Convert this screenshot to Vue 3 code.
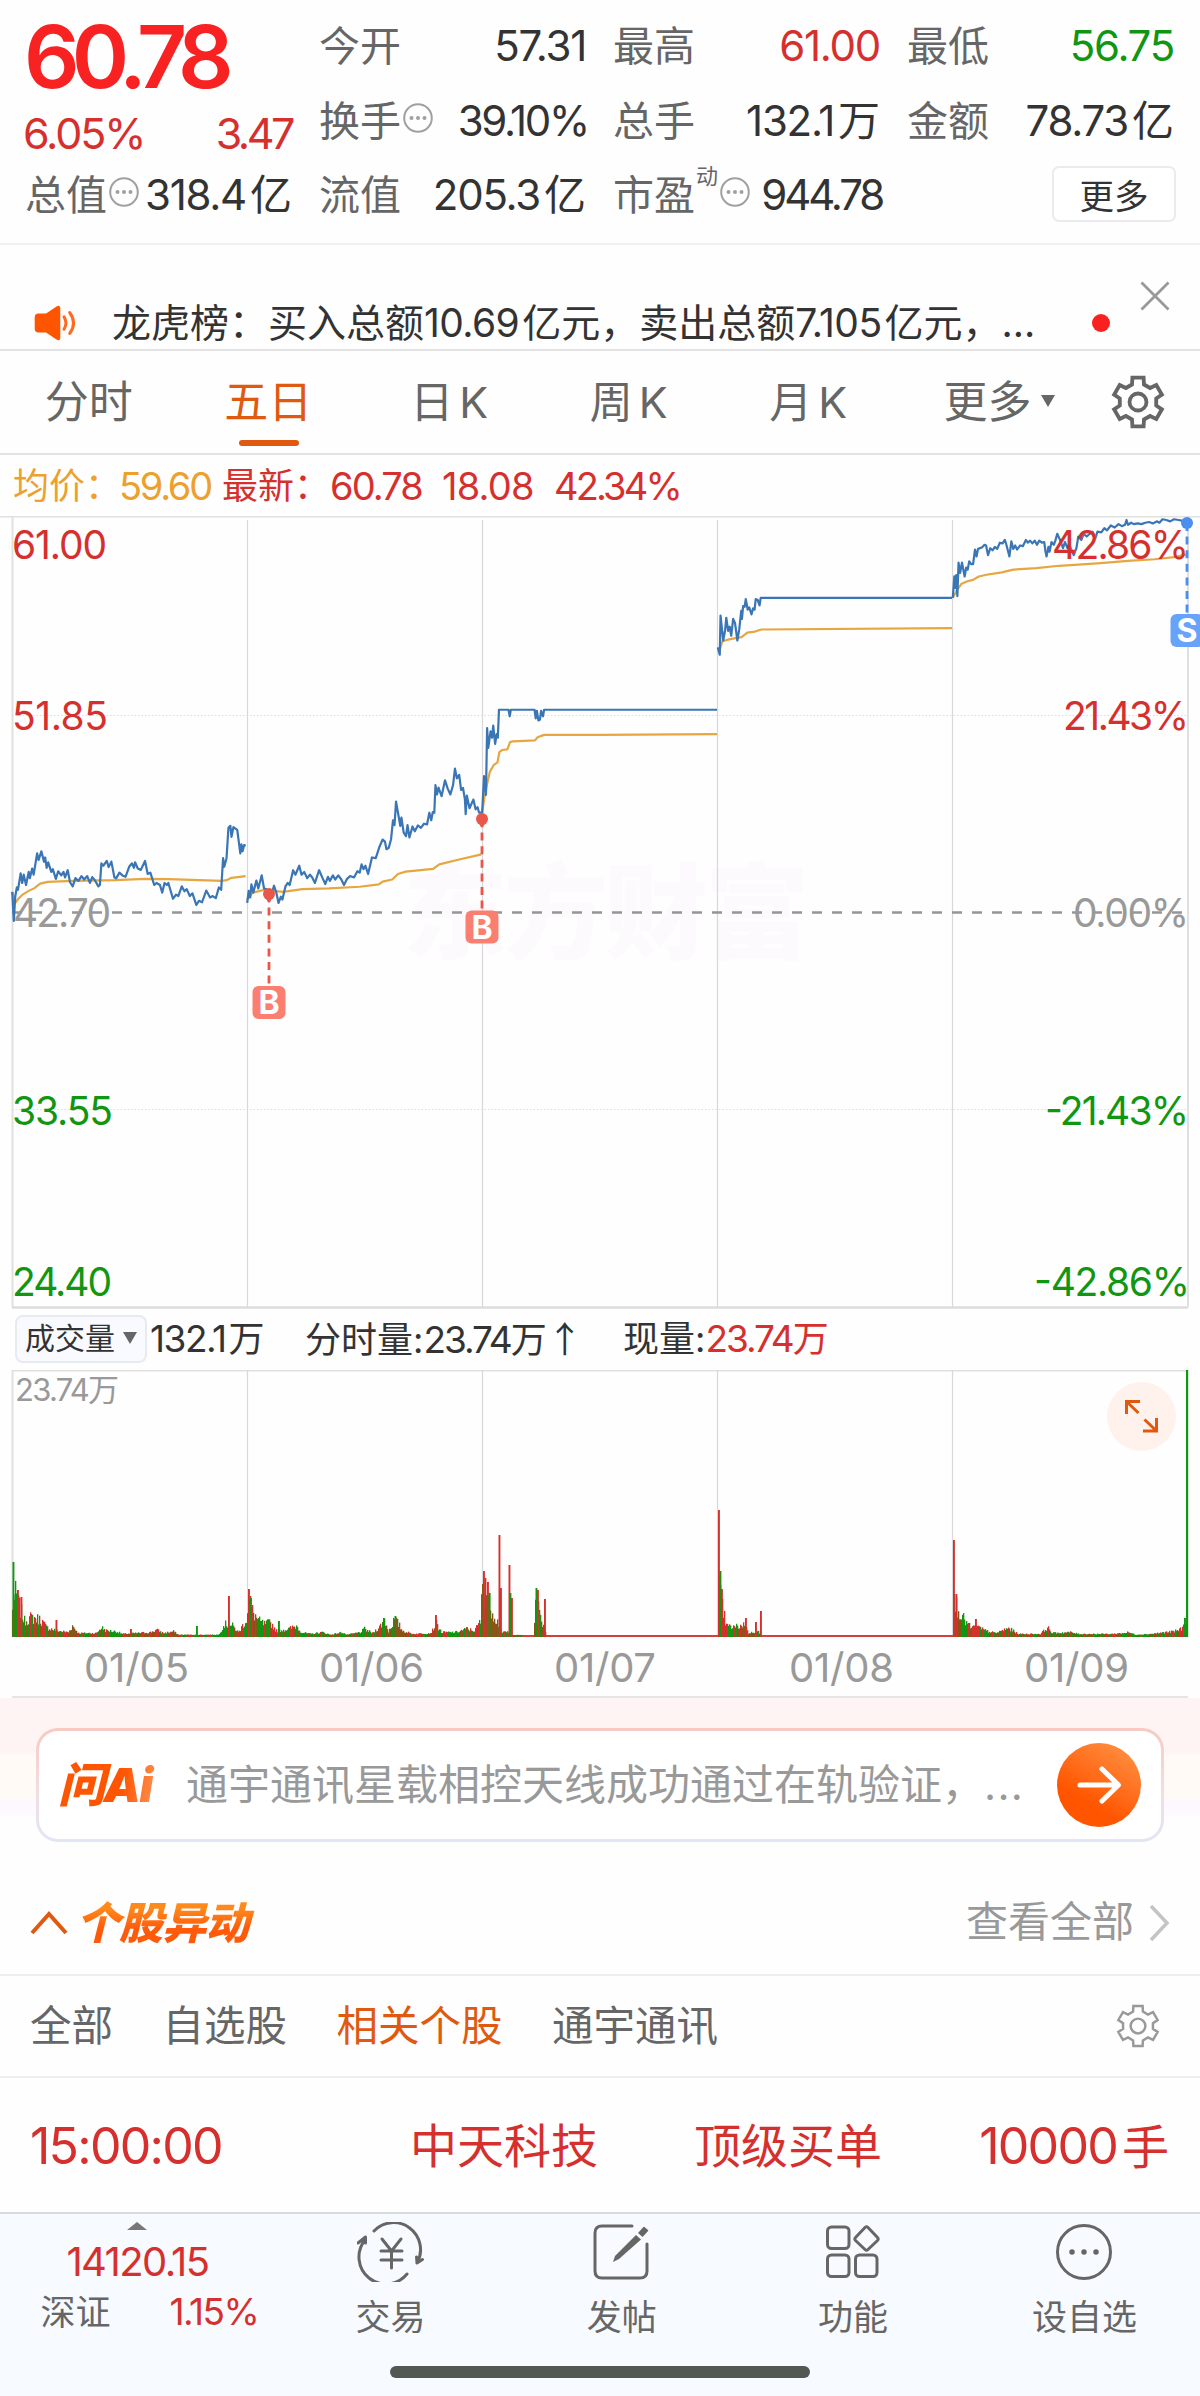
<template>
  <div class="page">
    <header class="quote">
      <div class="quote-col">
        <div class="price">60.78</div>
        <div class="change"><span>6.05%</span><span class="tight">3.47</span></div>
        <div class="cell cap">
          <span class="label">总值</span>
          <svg class="more-dot" viewBox="0 0 30 30"><circle cx="15" cy="15" r="13.8" /><path d="M8.5 15h.01M15 15h.01M21.5 15h.01" /></svg>
          <span class="value">318.4<i class="unit">亿</i></span>
        </div>
      </div>
      <div v-for="(col, i) in quoteCols" :key="i" class="quote-col">
        <div v-for="item in col" :key="item.label" class="cell">
          <span class="label">{{ item.label }}</span>
          <sup v-if="item.sup" class="label-sup">{{ item.sup }}</sup>
          <svg v-if="item.dot" class="more-dot" viewBox="0 0 30 30"><circle cx="15" cy="15" r="13.8" /><path d="M8.5 15h.01M15 15h.01M21.5 15h.01" /></svg>
          <span :class="['value', item.cls]">{{ item.value }}<i v-if="item.unit" class="unit">{{ item.unit }}</i></span>
        </div>
        <div v-if="col.length < 3" class="cell">
          <button class="more-btn">更多</button>
        </div>
      </div>
    </header>

    <section class="notice">
      <svg class="speaker" viewBox="0 0 46 38">
        <path d="M4 9h8L23 1.5q4-2 4 2v31q0 4-4 2L12 29H4q-4 0-4-4V13q0-4 4-4z" fill="#ff5500" />
        <path d="M31 12.5q4 6.500 0 13M37 8q8 11 0 22" fill="none" stroke="#ff6a20" stroke-width="3.200" stroke-linecap="round" />
      </svg>
      <p class="notice-text">龙虎榜：买入总额<i>10.69</i>亿元，卖出总额<i>7.105</i>亿元，...</p>
      <span class="red-dot"></span>
      <svg class="close" viewBox="0 0 30 30"><path d="M1.500 1.500l27 27M28.500 1.500l-27 27" /></svg>
    </section>

    <nav class="tabs">
      <div v-for="tab in tabs" :key="tab" :class="['tab', { active: tab === '五日', kline: tab.endsWith('K') }]">{{ tab }}</div>
      <div class="tab">更多<i class="caret"></i></div>
      <svg class="gear" viewBox="-28 -28 56 56"><path :d="gearPath" /><circle r="8.500" /></svg>
    </nav>

    <div class="legend">
      <span class="avg">均价：</span><span class="avg num">59.60</span>
      <span class="latest">最新：</span><span class="num">60.78</span><span class="num wide">18.08</span><span class="num">42.34%</span>
    </div>

    <svg class="chart" viewBox="0 0 1200 793" width="1200" height="793">
      <text class="watermark" x="403" y="435" textLength="406">东方财富</text>
      <path class="frame" d="M0 .5H1200M12.500 0V791M1188 0V791" />
      <path class="grid" d="M247.500 4V791M482.500 4V791M717.500 4V791M952.500 4V791" />
      <path class="dotted" d="M12 199.500H1188M12 593.500H1188" />
      <path d="M12 791.500H1188" stroke="#dcdcdc" stroke-width="2.500" />
      <path class="zero" d="M12 396.500H1188" />
      <g transform="translate(0 -16) scale(.38265 .34439)">
        <polyline v-for="(p, i) in avgLines" :key="'a' + i" class="line avg-line" :points="p" />
        <polyline v-for="(p, i) in priceLines" :key="'p' + i" class="line price-line" :points="p" />
        <g transform="translate(1568 0)">
          <polyline v-for="(p, i) in avgLinesRight" :key="'ar' + i" class="line avg-line" :points="p" />
          <polyline v-for="(p, i) in priceLinesRight" :key="'pr' + i" class="line price-line" :points="p" />
        </g>
      </g>
      <text
        v-for="a in axis"
        :key="a.text"
        :x="a.x"
        :y="a.y"
        :fill="a.fill"
        :textLength="a.w"
        class="axis"
      >{{ a.text }}</text>
      <g v-for="m in marks" :key="m.x">
        <path :d="`M${m.x} ${m.from}V${m.to}`" :stroke="m.line" class="mark-line" />
        <circle :cx="m.x" :cy="m.from" r="6" :fill="m.line" />
        <path v-if="m.text === 'B'" :d="`M${m.x - 5} ${m.from + 2}l5 7l5-7z`" :fill="m.line" />
        <rect :x="m.x - 16.500" :y="m.to" width="33" height="33" rx="6" :fill="m.fill" />
        <text :x="m.x" :y="m.to + 28" class="mark-text">{{ m.text }}</text>
      </g>
    </svg>

    <div class="volume-bar">
      <span class="pill">成交量<i class="caret small"></i></span>
      <span class="vol-total"><i>132.1</i>万</span>
      <span class="vol-minute">分时量:<i>23.74</i>万<b>↑</b></span>
      <span class="vol-now">现量:<em><i>23.74</i>万</em></span>
    </div>

    <svg class="volume" viewBox="0 0 1200 328" width="1200" height="328">
      <path class="frame" d="M12 .5H1188M12.500 0V267" />
      <path class="grid" d="M247.500 0V267M482.500 0V267M717.500 0V267M952.500 0V267" />
      <text class="vol-max" x="15" y="31" textLength="104">23.74万</text>
      <circle cx="1141.500" cy="46.500" r="34.400" fill="#fff1eb" />
      <path class="expand" d="M1126.500 44V31.500H1140M1127.500 32.500L1138.500 43M1156.500 48V61H1143M1155.500 60L1144.500 49.500" />
      <path d="M12 266H1188" stroke="#d0403c" stroke-width="2" />
      <rect
        v-for="(b, i) in bars"
        :key="i"
        :x="b.x"
        :y="267 - b.h"
        :width="b.w"
        :height="b.h"
        :fill="b.color"
      />
      <text v-for="d in dates" :key="d.text" class="date" :x="d.x" y="312" :textLength="d.w">{{ d.text }}</text>
      <path d="M12 327H1188" stroke="#e6e4e4" stroke-width="2" />
    </svg>

    <section class="ai">
      <div class="ai-box">
        <div class="ai-inner">
          <span class="ai-logo">问Ai</span>
          <span class="ai-text">通宇通讯星载相控天线成功通过在轨验证，<i>...</i></span>
          <svg class="ai-go" viewBox="0 0 84 84">
            <defs>
              <linearGradient id="go" x1="0.300" y1="0.900" x2="0.800" y2="0.100">
                <stop offset="0.200" stop-color="#ff5500" />
                <stop offset="1" stop-color="#ff8a3c" />
              </linearGradient>
            </defs>
            <circle cx="42" cy="42" r="42" fill="url(#go)" />
            <path d="M23 42H61M45 26L61.500 42L45 58" fill="none" stroke="#fff" stroke-width="5" stroke-linecap="round" stroke-linejoin="round" />
          </svg>
        </div>
      </div>
    </section>

    <section class="moves-head">
      <svg class="chev-up" viewBox="0 0 38 26"><path d="M2 23L19 4L36 23" /></svg>
      <h2>个股异动</h2>
      <span class="all">查看全部</span>
      <svg class="chev-right" viewBox="0 0 22 38"><path d="M3 2L19 19L3 36" /></svg>
    </section>

    <nav class="filters">
      <span v-for="f in filters" :key="f" :class="{ active: f === '相关个股' }">{{ f }}</span>
      <svg class="gear light" viewBox="-28 -28 56 56"><path :d="gearPath" /><circle r="9" /></svg>
    </nav>

    <div class="move-row">
      <span class="time">15:00:00</span>
      <span class="name">中天科技</span>
      <span class="kind">顶级买单</span>
      <span class="amount"><i>10000</i>手</span>
    </div>

    <footer class="bottom">
      <div class="bottom-items">
        <div class="index">
          <i class="up"></i>
          <div class="index-val">14120.15</div>
          <div class="index-row"><span>深证</span><span class="pct">1.15%</span></div>
        </div>
        <div class="item">
          <svg viewBox="0 0 68 60" class="icon">
            <path d="M17 9A27 27 0 0 1 60 41M60 41l-.500-6M60 41l5.500-3.500" />
            <path d="M50 52A27 27 0 0 1 8 18M1 21l7.500-6v6" />
            <path d="M25 17l9.500 12L44 17M34.500 29v17M24 29h21M24 38h21" />
          </svg>
          <span>交易</span>
        </div>
        <div class="item">
          <svg viewBox="0 0 68 60" class="icon">
            <path d="M44 4H14q-7 0-7 7v38q0 7 7 7h38q7 0 7-7V22" />
            <path d="M51 11l5-5.500 3.500 3-5 5.500z" fill="#666" stroke-width="1.500" />
            <path d="M48 13l5 4.500L31 37l-6 3 2-6z" fill="#666" stroke="none" />
          </svg>
          <span>发帖</span>
        </div>
        <div class="item">
          <svg viewBox="0 0 68 60" class="icon">
            <rect x="8.500" y="5" width="21.500" height="21.500" rx="4" />
            <rect x="8.500" y="33" width="21.500" height="21.500" rx="4" />
            <rect x="36.500" y="33" width="21.500" height="21.500" rx="4" />
            <path d="M46 5.500q1.500-1.500 3 0l9.500 10q1.500 1.500 0 3l-9.500 9q-1.500 1.500-3 0l-9.500-9q-1.500-1.500 0-3z" />
          </svg>
          <span>功能</span>
        </div>
        <div class="item">
          <svg viewBox="0 0 68 60" class="icon">
            <circle cx="34" cy="30" r="26.500" />
            <path d="M22 30h.01M34 30h.01M46 30h.01" stroke-width="5.500" />
          </svg>
          <span>设自选</span>
        </div>
      </div>
      <div class="home"></div>
    </footer>
  </div>
</template>

<script setup>
import { computed } from 'vue'

const quoteCols = [
  [
    { label: '今开', value: '57.31' },
    { label: '换手', value: '39.10%', cls: 'tight', dot: true },
    { label: '流值', value: '205.3', unit: '亿' },
  ],
  [
    { label: '最高', value: '61.00', cls: 'red' },
    { label: '总手', value: '132.1', unit: '万' },
    { label: '市盈', sup: '动', value: '944.78', cls: 'tighter', dot: true },
  ],
  [
    { label: '最低', value: '56.75', cls: 'green' },
    { label: '金额', value: '78.73', unit: '亿' },
  ],
]

const tabs = ['分时', '五日', '日K', '周K', '月K']
const filters = ['全部', '自选股', '相关个股', '通宇通讯']

const dates = [
  { text: '01/05', x: 84, w: 105 },
  { text: '01/06', x: 319, w: 105 },
  { text: '01/07', x: 554, w: 102 },
  { text: '01/08', x: 789, w: 105 },
  { text: '01/09', x: 1024, w: 105 },
]

const RED = '#d6302e'
const GREEN = '#119611'
const GRAY = '#999999'

const axis = [
  { text: '61.00', x: 12, y: 43, w: 95, fill: RED },
  { text: '51.85', x: 12, y: 214, w: 96, fill: RED },
  { text: '42.70', x: 13, y: 411, w: 98, fill: GRAY },
  { text: '33.55', x: 12, y: 609, w: 101, fill: GREEN },
  { text: '24.40', x: 12, y: 780, w: 100, fill: GREEN },
  { text: '42.86%', x: 1052, y: 43, w: 137, fill: RED },
  { text: '21.43%', x: 1063, y: 214, w: 126, fill: RED },
  { text: '0.00%', x: 1073, y: 411, w: 116, fill: GRAY },
  { text: '-21.43%', x: 1045, y: 609, w: 144, fill: GREEN },
  { text: '-42.86%', x: 1034, y: 780, w: 156, fill: GREEN },
]

const marks = [
  { text: 'B', x: 269, from: 378, to: 470, line: '#e8574a', fill: '#fa7f70' },
  { text: 'B', x: 482, from: 303, to: 394.5, line: '#e8574a', fill: '#fa7f70' },
  { text: 'S', x: 1187, from: 7, to: 98, line: '#4a8fee', fill: '#67a3fb' },
]

const priceLines = [
  '32,1138 36,1222 40,1150 44,1125 47,1132 54,1084 58,1112 62,1088 68,1118 75,1080 78,1098 84,1070 88,1088 97,1026 101,1045 108,1020 115,1050 118,1038 122,1068 126,1052 134,1080 138,1072 146,1100 152,1078 160,1090 166,1080 170,1096 177,1075 183,1110 190,1122 197,1098 205,1106 213,1092 220,1102 228,1092 235,1112 241,1095 248,1104 257,1122 261,1118 265,1055 270,1062 279,1048 284,1066 291,1050 299,1096 304,1098 312,1082 320,1090 328,1094 338,1064 345,1055 350,1068 353,1052 360,1070 368,1074 379,1048 386,1086 393,1082 403,1118 409,1112 418,1118 424,1140 430,1112 436,1118 440,1112 452,1158 460,1146 466,1150 475,1122 482,1136 488,1130 496,1150 503,1142 513,1176 520,1164 528,1168 539,1134 549,1154 556,1150 564,1156 572,1125 578,1132 583,1040 586,1065 592,1040 597,952 602,946 605,978 610,950 620,958 628,1026 631,1000 634,1020 638,1002 642,1004',
  '646,1170 650,1135 654,1154 657,1116 662,1140 670,1105 675,1128 684,1090 690,1128 696,1130 703,1165 708,1150 716,1120 722,1140 728,1170 734,1152 738,1160 746,1122 752,1112 757,1118 766,1075 772,1088 782,1062 788,1088 795,1080 803,1098 810,1088 816,1096 823,1112 834,1075 843,1098 850,1115 857,1094 862,1106 870,1090 876,1102 884,1090 892,1102 899,1118 907,1100 915,1092 925,1096 934,1078 940,1082 945,1058 950,1072 955,1062 962,1086 972,1038 982,1040 992,1006 1000,986 1006,992 1010,1014 1016,1010 1022,985 1027,930 1031,944 1035,876 1042,920 1046,946 1049,922 1055,966 1061,976 1065,944 1070,980 1078,948 1084,962 1092,945 1100,952 1108,940 1116,942 1122,908 1127,930 1131,906 1135,908 1138,828 1142,855 1146,835 1154,860 1163,814 1170,838 1177,855 1184,828 1189,780 1194,808 1200,798 1205,842 1210,836 1215,870 1217,912 1220,858 1227,895 1237,870 1243,898 1248,892 1252,908 1260,908 1265,802 1270,856 1273,662 1276,720 1282,672 1286,690 1289,655 1294,708 1298,680 1301,690 1304,609 1329,609 1332,628 1335,609 1397,609 1400,634 1403,612 1407,640 1411,638 1414,612 1419,628 1422,609 1874,609',
]
const priceLinesRight = [
  '308,428 313,449 315,336 322,408 327,378 330,342 335,380 339,368 343,394 348,345 353,358 359,408 364,375 369,322 371,345 374,308 378,310 381,288 386,318 390,312 396,332 400,315 404,318 407,288 412,290 417,306 420,284 920,284',
  '922,284 926,222 928,255 931,218 934,279 937,182 941,212 946,182 953,222 957,196 961,202 965,178 970,186 975,186 980,144 984,164 988,142 998,138 1005,130 1009,132 1014,160 1020,140 1026,146 1032,136 1038,142 1045,124 1052,126 1058,116 1062,130 1070,164 1075,120 1080,142 1085,132 1090,144 1098,132 1105,134 1113,116 1118,124 1124,118 1130,126 1136,118 1142,130 1148,118 1155,124 1161,122 1164,148 1167,164 1172,136 1175,150 1180,122 1186,130 1190,118 1195,98 1203,118 1210,140 1215,122 1222,140 1226,128 1230,140 1238,160 1245,140 1250,106 1258,116 1264,98 1272,106 1280,98 1287,92 1295,110 1300,92 1310,94 1318,82 1325,88 1335,74 1345,80 1355,70 1364,76 1372,72 1376,58 1380,72 1388,66 1395,70 1405,68 1415,70 1425,66 1435,64 1445,68 1455,62 1462,66 1470,56 1480,58 1490,62 1500,56 1512,58 1520,60 1533,64',
]
const avgLines = [
  '32,1138 40,1170 48,1158 60,1145 75,1135 90,1127 105,1114 125,1109 190,1106 300,1104 380,1100 440,1101 580,1106 592,1104 605,1097 642,1092',
  '646,1160 660,1140 690,1132 740,1138 790,1130 860,1128 940,1123 990,1116 1000,1108 1025,1102 1040,1086 1060,1079 1132,1071 1148,1058 1200,1044 1258,1029',
  '1260,910 1265,870 1272,830 1280,790 1290,770 1300,762 1305,732 1312,726 1326,724 1333,703 1340,701 1398,698 1405,689 1422,682 1568,682 1874,680',
]
const avgLinesRight = [
  '308,430 311,440 320,410 340,404 370,398 385,385 405,382 422,376 920,372',
  '922,284 934,260 945,243 960,236 975,232 990,222 1010,217 1050,210 1080,202 1140,198 1200,191 1300,184 1380,177 1450,172 1500,166 1534,158',
]

// upper envelope of the minute volumes: [x, height], heights in between are interpolated
const envelope = [
  [12, 30], [15, 50], [19, 36], [24, 18], [30, 22], [40, 20], [46, 10], [56, 6], [68, 4], [72, 12], [78, 3], [96, 3], [101, 10], [106, 6], [116, 5], [122, 2], [150, 4], [156, 7], [163, 3], [173, 5], [178, 1], [218, 1], [224, 14], [232, 12], [238, 4], [246, 20],
  [248, 48], [252, 30], [258, 18], [264, 14], [270, 16], [276, 6], [288, 8], [296, 12], [301, 4], [310, 2], [322, 4], [330, 1], [342, 4], [346, 1], [360, 4], [364, 8], [372, 3], [380, 12], [384, 20], [388, 5], [394, 20], [398, 14], [402, 6], [412, 2], [430, 3], [436, 14], [441, 4], [455, 4], [466, 8], [474, 6], [480, 18],
  [482, 62], [486, 50], [492, 30], [499, 12], [501, 3], [507, 5], [509, 1], [533, 0], [535, 48], [540, 22], [545, 6], [546, 0], [717, 0],
  [718, 62], [722, 34], [726, 12], [732, 10], [740, 12], [744, 14], [748, 3], [758, 5], [760, 0], [952, 0],
  [953, 42], [958, 34], [962, 22], [970, 10], [978, 10], [985, 6], [995, 3], [1008, 9], [1018, 2], [1040, 2], [1047, 10], [1052, 3], [1070, 4], [1078, 2], [1112, 2], [1122, 3], [1128, 4], [1135, 1], [1150, 2], [1165, 4], [1174, 5], [1182, 9], [1186, 18],
]

const spikes = [
  [12.5, 75, GREEN], [14.5, 43, GREEN], [17, 47, RED], [20.5, 40, RED], [30, 20, RED], [34, 19, RED], [55.5, 17, RED], [130, 8, RED], [196, 11, GREEN], [228, 41, RED],
  [248, 48, RED], [250, 39, GREEN], [278, 16, GREEN], [383, 19, GREEN], [394.5, 21, GREEN], [435, 22, RED], [466, 10, RED],
  [483, 66, RED], [484.5, 59, RED], [487, 55, RED], [488.5, 44, GREEN], [498.5, 102, RED], [500, 49, RED], [508.5, 72, RED], [509.5, 44, GREEN], [511, 39, RED], [535.5, 49, GREEN], [537, 47, RED], [544, 38, RED],
  [718, 127, RED], [719.5, 66, GREEN], [721, 48, RED], [745, 19, RED], [755, 15, RED], [760, 26, RED],
  [953, 97, RED], [955.5, 43, RED], [975, 18, RED], [1184, 19, GREEN],
]

const bars = computed(() => {
  const out = []
  let seed = 7
  for (let i = 1; i < envelope.length; i++) {
    const [x0, h0] = envelope[i - 1]
    const [x1, h1] = envelope[i]
    for (let x = x0; x < x1; x += 1) {
      seed = (seed * 1103515245 + 12345) % 2147483648
      const r = seed / 2147483648
      const top = h0 + ((h1 - h0) * (x - x0)) / (x1 - x0)
      if (top < 0.5) continue
      out.push({
        x,
        w: 1.3,
        h: 1.5 + top * (0.5 + r * 0.6),
        color: Math.floor(r * 97) % 5 < 2 ? GREEN : r > 0.6 ? RED : '#8a5316',
      })
    }
  }
  for (const [x, h, color] of spikes) out.push({ x, w: 1.9, h, color })
  out.push({ x: 1186, w: 2.2, h: 267, color: GREEN })
  return out
})

const gearPath = computed(() => {
  const pts = []
  for (let k = 0; k < 6; k++) {
    for (const [r, a] of [[18.5, -19], [25, -13], [25, 13], [18.5, 19]]) {
      const t = ((k * 60 - 90 + a) * Math.PI) / 180
      pts.push(`${(r * Math.cos(t)).toFixed(1)} ${(r * Math.sin(t)).toFixed(1)}`)
    }
  }
  return `M${pts.join('L')}Z`
})
</script>

<style>
body {
  margin: 0;
  background: #fff;
}
</style>

<style scoped>
.page {
  width: 1200px;
  height: 2396px;
  overflow: hidden;
  display: flex;
  flex-direction: column;
  background: #fefefe;
  color: #333;
  font-family: Inter, "Noto Sans CJK SC", sans-serif;
  line-height: 1.4;
  white-space: nowrap;
}

.page > * {
  flex-shrink: 0;
  box-sizing: border-box;
}

i,
em {
  font-style: normal;
}

.num {
  letter-spacing: -0.05em;
}

/* quote */
.quote {
  height: 245px;
  padding: 9px 24px 0 25px;
  display: grid;
  grid-template-columns: repeat(4, 267px);
  column-gap: 27px;
  border-bottom: 2px solid #f0f0f0;
}

.quote-col {
  display: flex;
  flex-direction: column;
}

.price {
  height: 96px;
  margin-left: -1px;
  line-height: 95px;
  font-size: 87px;
  font-weight: 600;
  color: #f82222;
  letter-spacing: -0.09em;
}

.change {
  height: 56px;
  margin-left: -2px;
  line-height: 56px;
  font-size: 43px;
  letter-spacing: -0.05em;
  color: #d6302e;
  display: flex;
  justify-content: space-between;
}

.change .tight {
  letter-spacing: -0.08em;
}

.cell {
  height: 74.5px;
  display: flex;
  align-items: center;
  font-size: 42px;
  line-height: 60px;
}

.cell.cap {
  height: 68px;
}

.label {
  font-size: 41px;
  color: #666;
}

.label-sup {
  font-size: 22px;
  line-height: 24px;
  color: #666;
  align-self: flex-start;
  margin: 6px 0 0 1px;
}

.more-dot {
  width: 30px;
  height: 30px;
  margin: -6px 0 0 2px;
  fill: none;
  stroke: #a0a0a0;
  stroke-width: 2;
}

.more-dot path {
  stroke-width: 4;
  stroke-linecap: round;
}

.value {
  margin-left: auto;
  letter-spacing: -0.03em;
}

.value.tight {
  margin-right: -2px;
  letter-spacing: -0.055em;
}

.value.tighter {
  margin-right: -2px;
  letter-spacing: -0.075em;
}

.unit {
  margin-left: 4px;
  letter-spacing: 0;
}

.value.red {
  color: #d6302e;
}

.value.green {
  color: #119611;
}

.more-btn {
  width: 124px;
  height: 56px;
  margin: -3px -2px 0 auto;
  padding: 0;
  border: 2px solid #ebebee;
  border-radius: 7px;
  background: #fff;
  font: 34.500px/50px "Noto Sans CJK SC", sans-serif;
  color: #333;
}

/* notice */
.notice {
  height: 106px;
  padding: 0 30px 0 34px;
  display: flex;
  align-items: center;
  border-bottom: 2px solid #e2e2e2;
}

.speaker {
  width: 45px;
  height: 36px;
  margin-top: 52px;
}

.notice-text {
  width: 925px;
  margin: 52px 0 0 33px;
  font-size: 39px;
  line-height: 50px;
}

.notice-text i {
  margin-right: 3px;
  letter-spacing: -0.015em;
}

.red-dot {
  width: 18px;
  height: 18px;
  margin: 52px 0 0 55px;
  border-radius: 50%;
  background: #fa2020;
}

.close {
  width: 30px;
  height: 30px;
  margin: -2px 0 0 30px;
  fill: none;
  stroke: #999;
  stroke-width: 2.800;
}

/* period tabs */
.tabs {
  height: 104px;
  padding: 0 34px 0 0;
  display: flex;
  align-items: center;
  border-bottom: 2px solid #e2e2e2;
  color: #666;
}

.tab {
  position: relative;
  width: 179.500px;
  margin-left: -1px;
  margin-right: 1px;
  text-align: center;
  font-size: 44px;
  line-height: 104px;
}

.tab.kline {
  font-size: 43px;
  letter-spacing: 6px;
  text-indent: 9px;
}

.tab:nth-child(6) {
  width: 205px;
}

.tab.active {
  color: #df5a10;
}

.tab.active::after {
  content: '';
  position: absolute;
  left: 60px;
  bottom: 8px;
  width: 60px;
  height: 6px;
  border-radius: 3px;
  background: #df5a10;
}

.caret {
  display: inline-block;
  margin-left: 9px;
  vertical-align: 11px;
  border: 7px solid transparent;
  border-top: 12px solid #666;
  border-bottom: 0;
}

.gear {
  width: 56px;
  height: 56px;
  margin-left: auto;
  fill: none;
  stroke: #666;
  stroke-width: 3.800;
}

.gear.light {
  width: 46px;
  height: 46px;
  stroke: #999;
  stroke-width: 3;
}

/* legend */
.legend {
  height: 61px;
  padding-left: 13px;
  display: flex;
  align-items: center;
  font-size: 38px;
  line-height: 60px;
  color: #d6302e;
}

.legend .avg {
  color: #eda02c;
}

.avg:first-child {
  width: 106px;
  font-size: 36px;
}

.latest {
  width: 108px;
  font-size: 36px;
}

.legend .num {
  width: 112px;
}

.legend .num.wide {
  letter-spacing: -0.02em;
}

.legend .avg.num {
  width: 103px;
  letter-spacing: -0.06em;
}

.legend .num:last-child {
  width: auto;
  letter-spacing: -0.075em;
}

/* charts */
.chart,
.volume {
  display: block;
}

.frame {
  fill: none;
  stroke: #e0e0e0;
  stroke-width: 2;
}

.grid {
  fill: none;
  stroke: #d8d8d8;
  stroke-width: 1.200;
}

.dotted {
  stroke: #ddd;
  stroke-width: 1;
  stroke-dasharray: 1.500 2;
}

.zero {
  stroke: #959595;
  stroke-width: 2.400;
  stroke-dasharray: 10 10;
}

.line {
  fill: none;
  stroke-width: 2.200;
  stroke-linejoin: round;
  vector-effect: non-scaling-stroke;
}

.price-line {
  stroke: #3a75b5;
}

.avg-line {
  stroke: #e6a640;
}

.axis {
  font-size: 39px;
}

.watermark {
  font-size: 104px;
  font-weight: 900;
  fill: #fdfafd;
}

.mark-line {
  stroke-width: 2.800;
  stroke-dasharray: 8 5.600;
}

.mark-text {
  font-size: 32px;
  font-weight: 700;
  fill: #fff;
  text-anchor: middle;
}

.vol-max {
  font-size: 31px;
  fill: #999;
}

.date {
  font-size: 40px;
  fill: #999;
}

.expand {
  fill: none;
  stroke: #df5a10;
  stroke-width: 3;
}

.volume-bar {
  height: 61px;
  padding: 0 0 2px 15px;
  display: flex;
  align-items: center;
  font-size: 36px;
  line-height: 50px;
}

.volume-bar i {
  font-size: 37px;
  letter-spacing: -0.055em;
}

.volume-bar em {
  color: #d6302e;
}

.volume-bar b {
  font-family: "Noto Sans CJK SC", sans-serif;
  font-weight: 400;
}

.pill {
  box-sizing: border-box;
  width: 132px;
  height: 48px;
  padding-left: 8px;
  border: 2px solid #e8eaf2;
  border-radius: 8px;
  background: #f8faff;
  font-size: 30px;
  line-height: 42px;
}

.caret.small {
  margin-left: 8px;
  vertical-align: 5px;
}

.vol-total {
  width: 155px;
  padding-left: 3px;
}

.volume-bar .vol-total i {
  margin-right: 3px;
  letter-spacing: -0.04em;
}

.vol-minute {
  width: 318px;
}

/* ask ai */
.ai {
  height: 171px;
  padding: 30px 36px 0 36px;
  background: linear-gradient(#fff4f4 0, #fff4f4 54px, #fffaf5 58px, #fffaf5 98px, #fdf8ff 104px, #fdf9ff 116px, #fefefe 120px);
}

.ai-box {
  height: 114px;
  padding: 3px;
  box-sizing: border-box;
  border-radius: 22px;
  background: linear-gradient(#f8c9c1, #f3dcdf 50%, #e2e6f5);
}

.ai-inner {
  height: 108px;
  padding: 0 20px 0 19px;
  box-sizing: border-box;
  border-radius: 19px;
  background: #fff;
  display: flex;
  align-items: center;
}

.ai-logo {
  width: 128px;
  font-size: 47px;
  line-height: 60px;
  font-weight: 900;
  font-style: italic;
  letter-spacing: -0.03em;
  color: transparent;
  background: linear-gradient(100deg, #ff5500 50%, #ff9a60 80%);
  background-clip: text;
}

.ai-text {
  flex: 1;
  font-size: 42px;
  color: #999;
}

.ai-text i {
  letter-spacing: 0.03em;
}

.ai-go {
  width: 84px;
  height: 84px;
}

/* stock moves */
.moves-head {
  height: 107px;
  padding: 2px 30px 0 30px;
  display: flex;
  align-items: center;
  border-bottom: 2px solid #eee;
}

.chev-up {
  width: 38px;
  height: 26px;
  fill: none;
  stroke: #df5a10;
  stroke-width: 4;
}

.moves-head h2 {
  margin: 0 0 0 8px;
  padding-right: 10px;
  font-size: 44px;
  line-height: 60px;
  font-weight: 900;
  font-style: italic;
  letter-spacing: -0.02em;
  color: transparent;
  background: linear-gradient(#ff8a1c 25%, #ff5a0a 60%);
  background-clip: text;
}

.all {
  margin-left: auto;
  font-size: 42px;
  color: #999;
}

.chev-right {
  width: 22px;
  height: 38px;
  margin-left: 14px;
  fill: none;
  stroke: #c4c4c4;
  stroke-width: 3.500;
}

.filters {
  height: 102px;
  padding: 0 39px 0 30px;
  display: flex;
  align-items: center;
  gap: 49.500px;
  border-bottom: 2px solid #eee;
  font-size: 41.500px;
  color: #666;
}

.filters .active {
  color: #df5a10;
}

.move-row {
  height: 134px;
  padding: 2px 31px 0 30px;
  display: flex;
  align-items: center;
  font-size: 47px;
  line-height: 70px;
  color: #d6302e;
}

.time {
  width: 380px;
  font-size: 50px;
  letter-spacing: -0.035em;
}

.name {
  width: 284px;
}

.amount {
  margin-left: auto;
}

.amount i {
  margin-right: 5px;
  font-size: 50px;
  letter-spacing: -0.035em;
}

/* bottom bar */
.bottom {
  height: 185px;
  border-top: 2px solid #d8dade;
  background: #f7faff;
  color: #666;
}

.bottom-items {
  display: flex;
  height: 152px;
}

.index {
  width: 275px;
  display: flex;
  flex-direction: column;
  align-items: center;
}

.up {
  margin-top: 8px;
  border: 10px solid transparent;
  border-bottom: 8px solid #777;
  border-top: 0;
}

.index-val {
  margin-top: 6px;
  font-size: 40px;
  line-height: 52px;
  letter-spacing: -0.04em;
  color: #d6302e;
}

.index-row {
  width: 218px;
  margin-left: 24px;
  display: flex;
  justify-content: space-between;
  font-size: 35px;
  line-height: 48px;
}

.pct {
  font-size: 37px;
  letter-spacing: -0.04em;
  color: #d6302e;
}

.item {
  width: 231.300px;
  display: flex;
  flex-direction: column;
  align-items: center;
  font-size: 35px;
  line-height: 50px;
}

.icon {
  width: 68px;
  height: 60px;
  margin: 8px 0 10px;
  fill: none;
  stroke: #666;
  stroke-width: 3;
  stroke-linecap: round;
  stroke-linejoin: round;
}

.home {
  width: 420px;
  height: 12px;
  margin: 0 auto;
  border-radius: 6px;
  background: #525852;
}
</style>
